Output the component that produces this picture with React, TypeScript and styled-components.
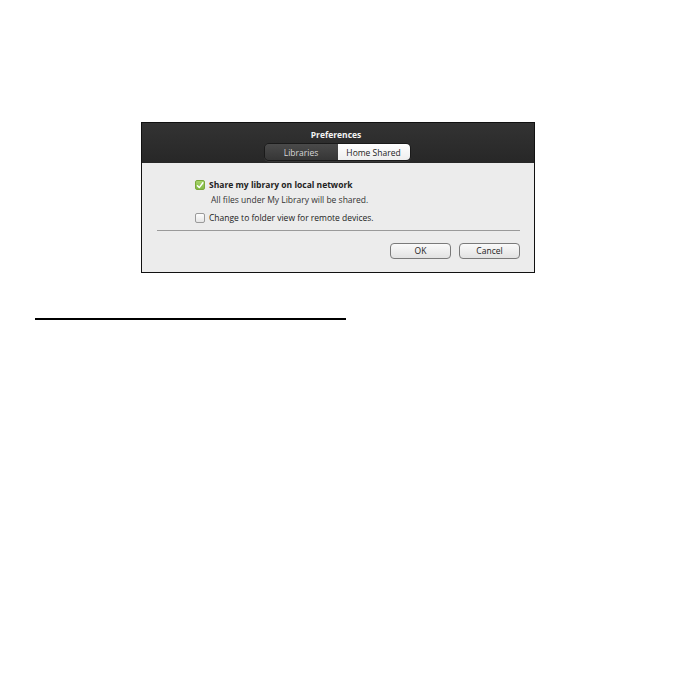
import { createGlobalStyle } from "styled-components";
import styled from "styled-components";

const GlobalStyle = createGlobalStyle`
  html, body {
    margin: 0;
    padding: 0;
    background: #ffffff;
  }
  body {
    font-family: "Open Sans", "DejaVu Sans", sans-serif;
  }
`;

const Page = styled.div`
  width: 680px;
  height: 680px;
  padding-top: 122px;
  box-sizing: border-box;
`;

const Dialog = styled.div`
  margin-left: 141px;
  width: 394px;
  height: 151px;
  box-sizing: border-box;
  border: 1px solid #111;
  background: #ececec;
  display: flex;
  flex-direction: column;
`;

const Header = styled.div`
  height: 40px;
  background: linear-gradient(#333333, #272727);
  display: flex;
  flex-direction: column;
  align-items: center;
  padding-top: 6px;
  box-sizing: border-box;
`;

const Title = styled.div`
  color: #f4f4f4;
  font-size: 8.5px;
  font-weight: 700;
  line-height: 12px;
  margin-left: -4px;
`;

const Segments = styled.div`
  display: flex;
  height: 16px;
  margin-left: -2px;
  margin-top: 2px;
  border-radius: 5px;
  border: 1px solid #1a1a1a;
  overflow: hidden;
  box-shadow: 0 1px 0 rgba(255, 255, 255, 0.08);
`;

const Segment = styled.div<{ $active?: boolean; $w: number }>`
  width: ${(p) => p.$w}px;
  display: flex;
  align-items: center;
  justify-content: center;
  font-size: 8.5px;
  color: ${(p) => (p.$active ? "#1c1c1c" : "#d8d8d8")};
  background: ${(p) =>
    p.$active
      ? "linear-gradient(#ffffff, #eeeeee)"
      : "linear-gradient(#4a4a4a, #363636)"};
`;

const Body = styled.div`
  flex: 1;
  padding: 15px 14px 0 15px;
  display: flex;
  flex-direction: column;
`;

const Options = styled.div`
  padding-left: 38px;
  display: flex;
  flex-direction: column;
`;

const OptionRow = styled.div`
  display: flex;
  align-items: center;
  gap: 4px;
  height: 14px;
`;

const Box = styled.div<{ $checked?: boolean }>`
  width: 10px;
  height: 10px;
  box-sizing: border-box;
  border-radius: 2px;
  border: 1px solid ${(p) => (p.$checked ? "#7aa83a" : "#9a9a9a")};
  background: ${(p) =>
    p.$checked ? "linear-gradient(#a6d46a, #82b944)" : "linear-gradient(#fdfdfd, #e6e6e6)"};
  display: flex;
  align-items: center;
  justify-content: center;
`;

const Label = styled.span<{ $bold?: boolean }>`
  font-size: 8.5px;
  font-weight: ${(p) => (p.$bold ? 700 : 400)};
  color: #222;
  line-height: 12px;
`;

const Note = styled.div`
  font-size: 8.5px;
  color: #333;
  padding-left: 16px;
  line-height: 12px;
  margin-top: 2px;
  margin-bottom: 5px;
`;

const Rule = styled.div`
  height: 1px;
  background: #9a9a9a;
  margin-top: 5px;
`;

const Buttons = styled.div`
  display: flex;
  justify-content: flex-end;
  gap: 8px;
  margin-top: 12px;
`;

const Button = styled.button`
  width: 61px;
  height: 16px;
  padding: 0;
  border: 1px solid #7a7a7a;
  border-radius: 4px;
  background: linear-gradient(#fafafa, #e2e2e2);
  font-family: "Open Sans", "DejaVu Sans", sans-serif;
  font-size: 8.5px;
  color: #222;
  line-height: 14px;
`;

const Underline = styled.div`
  margin-top: 45px;
  margin-left: 35px;
  width: 311px;
  height: 2px;
  background: #000;
`;

export default function App() {
  return (
    <>
      <GlobalStyle />
      <Page>
        <Dialog>
          <Header>
            <Title>Preferences</Title>
            <Segments>
              <Segment $w={73}>Libraries</Segment>
              <Segment $w={72} $active>
                Home Shared
              </Segment>
            </Segments>
          </Header>
          <Body>
            <Options>
              <OptionRow>
                <Box $checked>
                  <svg width="9" height="9" viewBox="0 0 10 10">
                    <path
                      d="M1.8 5.2 L4.1 7.6 L8.6 1.6"
                      fill="none"
                      stroke="#ffffff"
                      strokeWidth="1.8"
                      strokeLinecap="round"
                      strokeLinejoin="round"
                    />
                  </svg>
                </Box>
                <Label $bold>Share my library on local network</Label>
              </OptionRow>
              <Note>All files under My Library will be shared.</Note>
              <OptionRow>
                <Box />
                <Label>Change to folder view for remote devices.</Label>
              </OptionRow>
            </Options>
            <Rule />
            <Buttons>
              <Button>OK</Button>
              <Button>Cancel</Button>
            </Buttons>
          </Body>
        </Dialog>
        <Underline />
      </Page>
    </>
  );
}
